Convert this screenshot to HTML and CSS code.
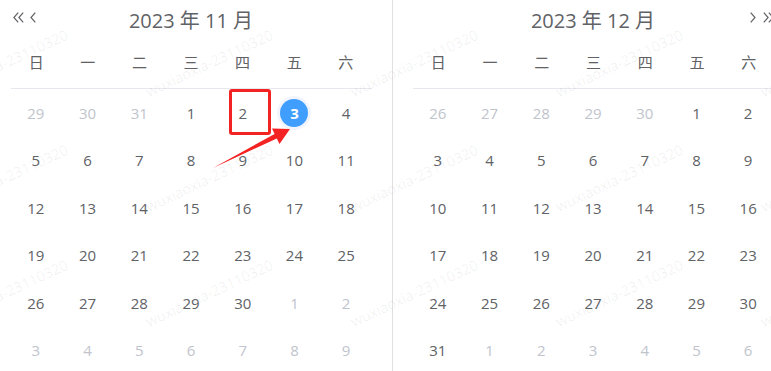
FILE: index.html
```html
<!DOCTYPE html>
<html lang="zh">
<head>
    <meta charset="UTF-8">
    <title>日期范围</title>
    <link rel="stylesheet" href="styles.css">
</head>
<body>
    <div class="picker">
        <div class="panel panel-left">
            <div class="header">
                <div class="arrows">
                    <svg class="icon icon-double" viewBox="0 0 11 11"><path d="M5.2 0.6 L0.9 5.5 L5.2 10.4 M10.2 0.6 L5.9 5.5 L10.2 10.4"/></svg>
                    <svg class="icon" viewBox="0 0 6 11"><path d="M5.3 0.6 L1 5.5 L5.3 10.4"/></svg>
                </div>
                <div class="title">2023 年 11 月</div>
                <div></div>
            </div>
            <div class="weekdays">
                <span>日</span><span>一</span><span>二</span><span>三</span><span>四</span><span>五</span><span>六</span>
            </div>
            <div class="days">
                <span class="off">29</span><span class="off">30</span><span class="off">31</span><span>1</span><span>2</span><span class="selected"><b>3</b></span><span>4</span>
                <span>5</span><span>6</span><span>7</span><span>8</span><span>9</span><span>10</span><span>11</span>
                <span>12</span><span>13</span><span>14</span><span>15</span><span>16</span><span>17</span><span>18</span>
                <span>19</span><span>20</span><span>21</span><span>22</span><span>23</span><span>24</span><span>25</span>
                <span>26</span><span>27</span><span>28</span><span>29</span><span>30</span><span class="off">1</span><span class="off">2</span>
                <span class="off">3</span><span class="off">4</span><span class="off">5</span><span class="off">6</span><span class="off">7</span><span class="off">8</span><span class="off">9</span>
            </div>
        </div>
        <div class="panel panel-right">
            <div class="header">
                <div></div>
                <div class="title">2023 年 12 月</div>
                <div class="arrows arrows-right">
                    <svg class="icon" viewBox="0 0 6 11"><path d="M0.7 0.6 L5 5.5 L0.7 10.4"/></svg>
                    <svg class="icon icon-double" viewBox="0 0 11 11"><path d="M0.8 0.6 L5.1 5.5 L0.8 10.4 M5.8 0.6 L10.1 5.5 L5.8 10.4"/></svg>
                </div>
            </div>
            <div class="weekdays">
                <span>日</span><span>一</span><span>二</span><span>三</span><span>四</span><span>五</span><span>六</span>
            </div>
            <div class="days">
                <span class="off">26</span><span class="off">27</span><span class="off">28</span><span class="off">29</span><span class="off">30</span><span>1</span><span>2</span>
                <span>3</span><span>4</span><span>5</span><span>6</span><span>7</span><span>8</span><span>9</span>
                <span>10</span><span>11</span><span>12</span><span>13</span><span>14</span><span>15</span><span>16</span>
                <span>17</span><span>18</span><span>19</span><span>20</span><span>21</span><span>22</span><span>23</span>
                <span>24</span><span>25</span><span>26</span><span>27</span><span>28</span><span>29</span><span>30</span>
                <span>31</span><span class="off">1</span><span class="off">2</span><span class="off">3</span><span class="off">4</span><span class="off">5</span><span class="off">6</span>
            </div>
        </div>

        <!-- watermark -->
        <div class="watermark">
            <span>wuxiaoxia-23110320</span><span>wuxiaoxia-23110320</span><span>wuxiaoxia-23110320</span><span>wuxiaoxia-23110320</span><span>wuxiaoxia-23110320</span>
            <span>wuxiaoxia-23110320</span><span>wuxiaoxia-23110320</span><span>wuxiaoxia-23110320</span><span>wuxiaoxia-23110320</span><span>wuxiaoxia-23110320</span>
            <span>wuxiaoxia-23110320</span><span>wuxiaoxia-23110320</span><span>wuxiaoxia-23110320</span><span>wuxiaoxia-23110320</span><span>wuxiaoxia-23110320</span>
        </div>

        <!-- annotation -->
        <div class="mark-box"></div>
        <svg class="mark-arrow" width="771" height="371" viewBox="0 0 771 371">
            <polygon points="213,168 276.8,138.4 279.5,144 290,129 272,128.6 274.6,134"/>
        </svg>
    </div>
</body>
</html>
```

FILE: styles.css
```css
body {
    margin: 0;
    background: #fff;
    font-family: "Open Sans", "Noto Sans CJK SC", sans-serif;
    color: #606266;
    overflow: hidden;
    width: 771px;
    height: 371px;
}
.picker {
    position: relative;
    display: flex;
    width: 820px;
    height: 371px;
}
.panel {
    box-sizing: border-box;
    height: 371px;
}
.panel-left {
    width: 393px;
    padding: 0 20px 0 10px;
    border-right: 1px solid #e0e0e0;
}
.panel-right {
    width: 400px;
    padding-left: 19px;
}
.panel-right .header,
.panel-right .weekdays,
.panel-right .days {
    width: 362px;
}
.header {
    display: grid;
    grid-template-columns: 1fr auto 1fr;
    align-items: center;
    height: 42px;
}
.title {
    font-size: 20px;
    line-height: 28px;
    color: #5f6266;
    margin-top: -1px;
}
.arrows {
    display: flex;
    align-items: center;
    gap: 6px;
    padding-left: 3px;
    margin-top: -7px;
}
.arrows-right {
    justify-content: flex-end;
    padding-left: 0;
    gap: 7px;
}
.icon {
    width: 6px;
    height: 11px;
    fill: none;
    stroke: #606266;
    stroke-width: 1.2;
}
.icon-double {
    width: 11px;
}
.weekdays {
    display: grid;
    grid-template-columns: repeat(7, 1fr);
    padding: 9px 0 15px;
    line-height: 22px;
    font-size: 15px;
    text-align: center;
    border-bottom: 1px solid #e6e8ee;
    margin-left: 1px;
}
.weekdays span {
    margin-left: -1px;
}
.days {
    display: grid;
    grid-template-columns: repeat(7, 1fr);
    grid-auto-rows: 47.5px;
    font-size: 15px;
}
.days span {
    display: flex;
    align-items: center;
    justify-content: center;
}
.days .off {
    color: #c0c4cc;
}
.days .selected b {
    width: 28px;
    height: 28px;
    border-radius: 50%;
    background: #409eff;
    box-shadow: 0 0 0 3px #f2f6fc;
    color: #fff;
    font-weight: 700;
    display: flex;
    align-items: center;
    justify-content: center;
}
.watermark {
    position: absolute;
    left: -55px;
    top: -15px;
    display: grid;
    grid-template-columns: repeat(5, 205px);
    grid-auto-rows: 115px;
    pointer-events: none;
}
.watermark span {
    align-self: end;
    font-size: 14.5px;
    line-height: 16px;
    color: rgba(0, 0, 0, 0.065);
    white-space: nowrap;
    transform: rotate(-25deg);
    transform-origin: left bottom;
}
.mark-box {
    position: absolute;
    left: 229px;
    top: 89px;
    width: 42px;
    height: 46px;
    box-sizing: border-box;
    border: 3px solid #f42323;
    border-radius: 3px;
}
.mark-arrow {
    position: absolute;
    left: 0;
    top: 0;
}
.mark-arrow polygon {
    fill: #f42323;
}
```
